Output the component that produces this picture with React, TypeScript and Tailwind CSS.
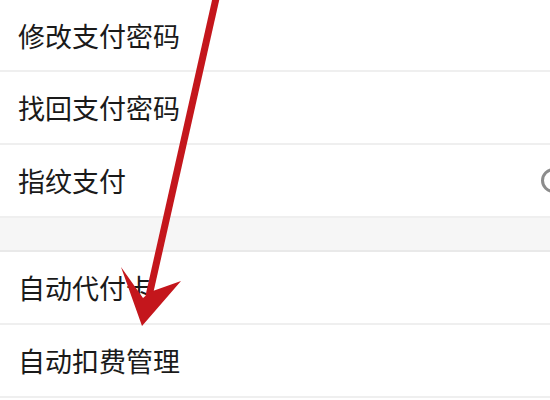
import React from "react";

type Row = { label: string; toggle?: boolean };

const topRows: Row[] = [
  { label: "修改支付密码" },
  { label: "找回支付密码" },
  { label: "指纹支付", toggle: true },
];

const bottomRows: Row[] = [{ label: "自动代付卡" }, { label: "自动扣费管理" }];

function SettingRow({ row, first }: { row: Row; first?: boolean }) {
  return (
    <div
      className={`flex items-center justify-between bg-white pl-[18px] border-b-2 border-[#efefef] ${
        first ? "h-[72px]" : "h-[73px]"
      }`}
    >
      <span className="text-[27px] leading-none text-[#1a1a1a]">{row.label}</span>
      {row.toggle && (
        <div className="w-[52px] h-[25px] -mr-[43px] rounded-full border-[3px] border-[#8c8c8c] bg-white shrink-0" />
      )}
    </div>
  );
}

export default function App() {
  return (
    <div
      className="relative w-[550px] h-[400px] overflow-hidden bg-white"
      style={{ fontFamily: '"Noto Sans CJK SC", "Noto Sans", sans-serif' }}
    >
      <div className="flex flex-col">
        {topRows.map((r, i) => (
          <SettingRow key={r.label} row={r} first={i === 0} />
        ))}
        <div className="h-[34px] bg-[#f6f6f6] border-b-2 border-[#e9e9e9]" />
        {bottomRows.map((r) => (
          <SettingRow key={r.label} row={r} />
        ))}
      </div>

      {/* red pointer arrow drawn over the list */}
      <svg className="absolute inset-0" width="550" height="400" viewBox="0 0 550 400">
        <line x1="217" y1="-6" x2="149" y2="296" stroke="#c4161c" strokeWidth="7" />
        <polygon
          points="121,267 143,298 150,292 181,281 142,326"
          fill="#c4161c"
        />
      </svg>
    </div>
  );
}
